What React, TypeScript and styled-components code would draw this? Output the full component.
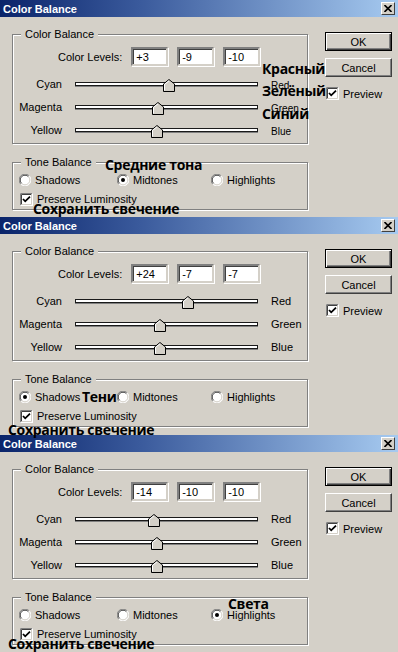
import React from "react";
import styled, { createGlobalStyle } from "styled-components";

const GlobalStyle = createGlobalStyle`
  html, body {
    margin: 0;
    padding: 0;
    background: #d4d0c8;
  }
  body {
    font-family: "Liberation Sans", Arial, sans-serif;
    font-size: 11px;
    color: #000;
  }
`;

const Page = styled.div`
  width: 398px;
  height: 652px;
  overflow: hidden;
  display: flex;
  flex-direction: column;
`;

const Dialog = styled.div<{ $h: number }>`
  position: relative;
  flex: none;
  height: ${(p) => p.$h}px;
  display: flex;
  flex-direction: column;
  background: #d4d0c8;
`;

const TitleBar = styled.div`
  height: 17px;
  flex: none;
  display: flex;
  align-items: center;
  justify-content: space-between;
  padding: 0 3px 0 3px;
  background: linear-gradient(90deg, #0a246a 0%, #3a5a9c 35%, #a6caf0 100%);
  color: #fff;
  font-weight: bold;
  font-size: 11px;
`;

const CloseButton = styled.div`
  width: 14px;
  height: 13px;
  box-sizing: border-box;
  display: flex;
  align-items: center;
  justify-content: center;
  background: #d4d0c8;
  border: 1px solid;
  border-color: #fff #404040 #404040 #fff;
`;

const Content = styled.div`
  display: flex;
  padding-left: 12px;
`;

const MainColumn = styled.div`
  width: 296px;
  flex: none;
  display: flex;
  flex-direction: column;
`;

const Group = styled.fieldset<{ $top: number }>`
  margin: ${(p) => p.$top}px 0 0 0;
  padding: 0 0 2px 0;
  min-width: 0;
  border: 1px solid #808080;
  box-shadow: inset 1px 1px 0 #fff, 1px 1px 0 #fff;
`;

const Legend = styled.legend`
  margin-left: 8px;
  padding: 0 4px;
  font-size: 11px;
  line-height: 13px;
  background: #d4d0c8;
`;

const LevelsRow = styled.div`
  display: flex;
  align-items: center;
  margin: 6px 0 0 45px;
  height: 19px;
`;

const LevelsLabel = styled.span`
  margin-right: 9px;
`;

const LevelInput = styled.div`
  width: 37px;
  height: 19px;
  box-sizing: border-box;
  margin-right: 9px;
  padding-left: 3px;
  display: flex;
  align-items: center;
  background: #fff;
  border: 2px solid;
  border-color: #808080 #d4d0c8 #d4d0c8 #808080;
  box-shadow: inset 1px 1px 0 #404040, 1px 1px 0 #fff;
`;

const Sliders = styled.div`
  margin-top: 6px;
  display: flex;
  flex-direction: column;
`;

const SliderRow = styled.div`
  display: flex;
  align-items: center;
  height: 23px;
`;

const LeftLabel = styled.span`
  width: 49px;
  flex: none;
  text-align: right;
`;

const RightLabel = styled.span<{ $compact?: boolean }>`
  flex: none;
  font-size: ${(p) => (p.$compact ? "10px" : "11px")};
  padding-top: ${(p) => (p.$compact ? "4px" : "0")};
`;

const Track = styled.div`
  position: relative;
  flex: none;
  width: 183px;
  height: 4px;
  box-sizing: border-box;
  margin: 0 13px;
  background: #fff;
  border: 1px solid #1a1a1a;
  box-shadow: 0 1px 0 #808080;
`;

const Thumb = styled.svg`
  position: absolute;
  top: -4px;
  margin-left: -6px;
`;

const ToneRow = styled.div`
  display: grid;
  grid-template-columns: 98px 94px auto;
  margin: 3px 0 0 6px;
  height: 16px;
  align-items: center;
`;

const Choice = styled.label`
  display: flex;
  align-items: center;
  gap: 4px;
`;

const PreserveRow = styled(Choice)`
  margin: 3px 0 0 7px;
  height: 16px;
`;

const SideColumn = styled.div`
  width: 67px;
  flex: none;
  margin-left: 17px;
  display: flex;
  flex-direction: column;
  padding-top: 15px;
`;

const Button = styled.div<{ $default?: boolean }>`
  height: 19px;
  box-sizing: border-box;
  display: flex;
  align-items: center;
  justify-content: center;
  margin-bottom: 7px;
  background: #d4d0c8;
  border: 1px solid;
  border-color: ${(p) => (p.$default ? "#000" : "#fff #404040 #404040 #fff")};
  box-shadow: ${(p) =>
    p.$default
      ? "inset 1px 1px 0 #fff, inset -1px -1px 0 #404040, inset -2px -2px 0 #808080"
      : "inset -1px -1px 0 #808080"};
`;

const PreviewRow = styled(Choice)`
  margin: 3px 0 0 1px;
`;

const Note = styled.span<{ $x: number; $y: number }>`
  position: absolute;
  z-index: 2;
  left: ${(p) => p.$x}px;
  top: ${(p) => p.$y}px;
  font-family: "Open Sans", "DejaVu Sans", sans-serif;
  font-weight: 700;
  font-size: 14px;
  line-height: 11px;
  letter-spacing: -0.3px;
  white-space: nowrap;
  color: #000;
`;

function Radio({ on }: { on?: boolean }) {
  return (
    <svg width="12" height="12" viewBox="0 0 12 12">
      <circle cx="6" cy="6" r="5.5" fill="#fff" />
      <path d="M1.8 10.2 A5.5 5.5 0 0 1 10.2 1.8" fill="none" stroke="#808080" />
      <path d="M2.6 9.4 A4.5 4.5 0 0 1 9.4 2.6" fill="none" stroke="#404040" />
      <path d="M10.2 1.8 A5.5 5.5 0 0 1 1.8 10.2" fill="none" stroke="#fff" />
      <path d="M9.4 2.6 A4.5 4.5 0 0 1 2.6 9.4" fill="none" stroke="#d4d0c8" />
      {on && <circle cx="6" cy="6" r="2" fill="#000" />}
    </svg>
  );
}

function Check() {
  return (
    <svg width="13" height="13" viewBox="0 0 13 13">
      <rect x="0" y="0" width="13" height="13" fill="#fff" />
      <path d="M0.5 12.5 V0.5 H12.5" fill="none" stroke="#808080" />
      <path d="M1.5 11.5 V1.5 H11.5" fill="none" stroke="#404040" />
      <path d="M0.5 12.5 H12.5 V0.5" fill="none" stroke="#fff" />
      <path d="M1.5 11.5 H11.5 V1.5" fill="none" stroke="#d4d0c8" />
      <path d="M3 6 L5.2 8.3 L10 3.6" fill="none" stroke="#000" strokeWidth="1.8" />
    </svg>
  );
}

function Slider({
  left,
  right,
  value,
  compact,
}: {
  left: string;
  right: string;
  value: number;
  compact?: boolean;
}) {
  const pct = ((value + 100) / 200) * 100;
  return (
    <SliderRow>
      <LeftLabel>{left}</LeftLabel>
      <Track>
        <Thumb width="12" height="13" viewBox="0 0 12 13" style={{ left: `${pct}%` }}>
          <path d="M0.5 12.5 V5 L6 0.5 L11.5 5 V12.5 Z" fill="#d4d0c8" stroke="#000" />
          <path d="M1.5 11.5 V5.4 L6 1.8" fill="none" stroke="#fff" />
        </Thumb>
      </Track>
      <RightLabel $compact={compact}>{right}</RightLabel>
    </SliderRow>
  );
}

type Tone = "shadows" | "midtones" | "highlights";
type NoteData = { text: string; x: number; y: number };

const fmt = (v: number) => (v > 0 ? `+${v}` : `${v}`);

function ColorBalance({
  height,
  levels,
  tone,
  notes,
  compact,
}: {
  height: number;
  levels: number[];
  tone: Tone;
  notes: NoteData[];
  compact?: boolean;
}) {
  return (
    <Dialog $h={height}>
      <TitleBar>
        <span>Color Balance</span>
        <CloseButton>
          <svg width="8" height="7" viewBox="0 0 8 7">
            <path d="M0.5 0 L7.5 7 M7.5 0 L0.5 7" stroke="#000" strokeWidth="1.6" />
          </svg>
        </CloseButton>
      </TitleBar>
      <Content>
        <MainColumn>
          <Group $top={11}>
            <Legend>Color Balance</Legend>
            <LevelsRow>
              <LevelsLabel>Color Levels:</LevelsLabel>
              {levels.map((v, i) => (
                <LevelInput key={i}>{fmt(v)}</LevelInput>
              ))}
            </LevelsRow>
            <Sliders>
              <Slider left="Cyan" right="Red" value={levels[0]} compact={compact} />
              <Slider left="Magenta" right="Green" value={levels[1]} compact={compact} />
              <Slider left="Yellow" right="Blue" value={levels[2]} compact={compact} />
            </Sliders>
          </Group>
          <Group $top={12}>
            <Legend>Tone Balance</Legend>
            <ToneRow>
              <Choice>
                <Radio on={tone === "shadows"} />
                Shadows
              </Choice>
              <Choice>
                <Radio on={tone === "midtones"} />
                Midtones
              </Choice>
              <Choice>
                <Radio on={tone === "highlights"} />
                Highlights
              </Choice>
            </ToneRow>
            <PreserveRow>
              <Check />
              Preserve Luminosity
            </PreserveRow>
          </Group>
        </MainColumn>
        <SideColumn>
          <Button $default>OK</Button>
          <Button>Cancel</Button>
          <PreviewRow>
            <Check />
            Preview
          </PreviewRow>
        </SideColumn>
      </Content>
      {notes.map((n) => (
        <Note key={n.text} $x={n.x} $y={n.y}>
          {n.text}
        </Note>
      ))}
    </Dialog>
  );
}

const dialogs: {
  height: number;
  levels: number[];
  tone: Tone;
  notes: NoteData[];
  compact?: boolean;
}[] = [
  {
    height: 217,
    levels: [3, -9, -10],
    tone: "midtones",
    compact: true,
    notes: [
      { text: "Красный", x: 262, y: 63 },
      { text: "Зелёный", x: 262, y: 85 },
      { text: "Синий", x: 262, y: 108 },
      { text: "Средние тона", x: 105, y: 159 },
      { text: "Сохранить свечение", x: 33, y: 203 },
    ],
  },
  {
    height: 218,
    levels: [24, -7, -7],
    tone: "shadows",
    notes: [
      { text: "Тени", x: 82, y: 174 },
      { text: "Сохранить свечение", x: 8, y: 207 },
    ],
  },
  {
    height: 217,
    levels: [-14, -10, -10],
    tone: "highlights",
    notes: [
      { text: "Света", x: 228, y: 163 },
      { text: "Сохранить свечение", x: 8, y: 203 },
    ],
  },
];

export default function App() {
  return (
    <>
      <GlobalStyle />
      <Page>
        {dialogs.map((d, i) => (
          <ColorBalance key={i} {...d} />
        ))}
      </Page>
    </>
  );
}
